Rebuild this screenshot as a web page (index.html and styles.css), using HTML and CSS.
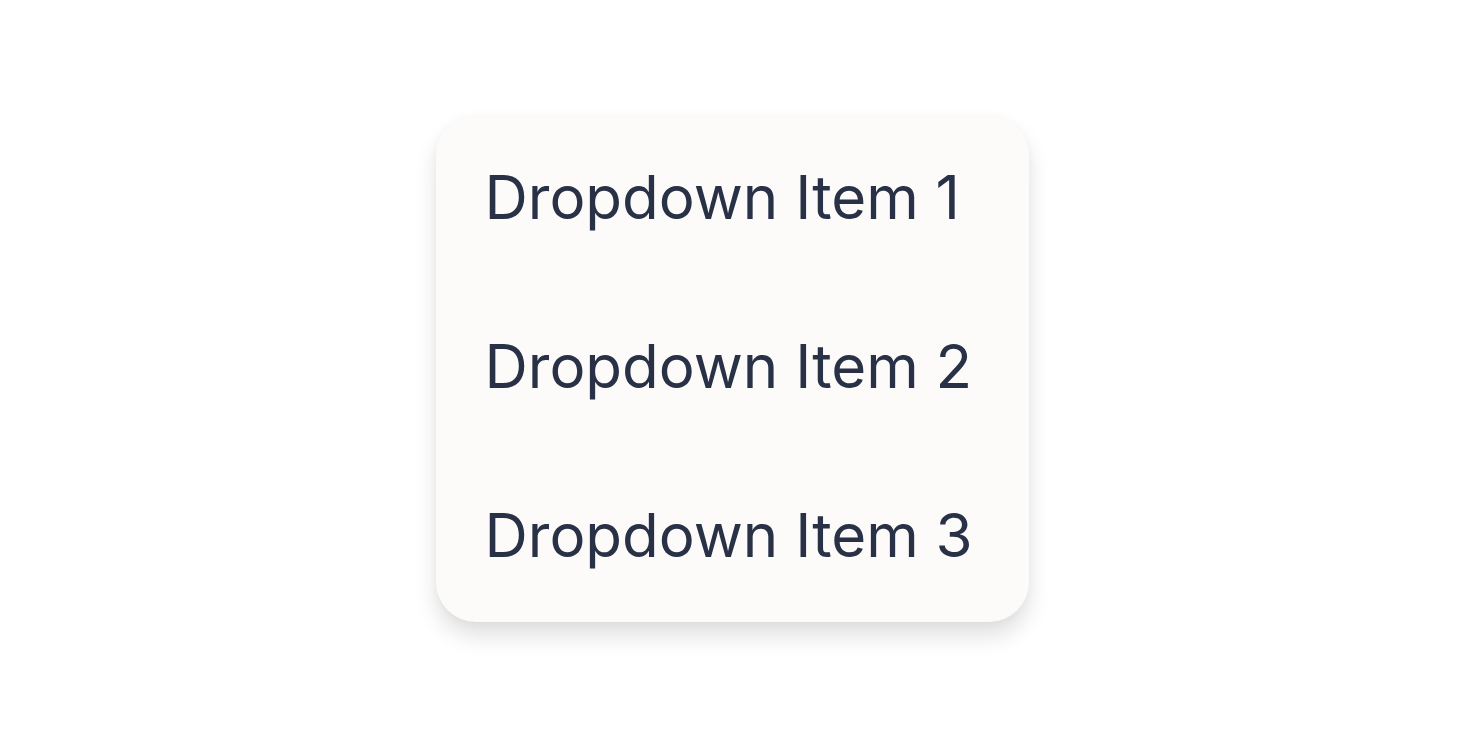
FILE: index.html
```html
<!DOCTYPE html>
<html lang="en">

<head>
  <meta charset="UTF-8">
  <title>Dropdown</title>
  <link rel="stylesheet" href="styles.css">
</head>

<body>
  <div class="page">
    <ul class="dropdown">
      <li class="dropdown-item">Dropdown Item 1</li>
      <li class="dropdown-item">Dropdown Item 2</li>
      <li class="dropdown-item">Dropdown Item 3</li>
    </ul>
  </div>
</body>

</html>
```

FILE: styles.css
```css
body {
  margin: 0;
  padding: 0;
  background-color: #ffffff;
  font-family: Inter, "Noto Sans", sans-serif;
}

.page {
  height: 736px;
  display: flex;
  align-items: center;
  justify-content: center;
}

.dropdown {
  list-style: none;
  margin: 0;
  padding: 0;
  width: 593px;
  background-color: #fcfbfa;
  border-radius: 40px;
  box-shadow: 0 14px 22px rgba(0, 0, 0, 0.12), 0 2px 8px rgba(0, 0, 0, 0.03);
}

.dropdown-item {
  height: 169px;
  box-sizing: border-box;
  display: flex;
  align-items: center;
  padding: 0 49px 4px;
  font-size: 60px;
  color: #283145;
}
```
